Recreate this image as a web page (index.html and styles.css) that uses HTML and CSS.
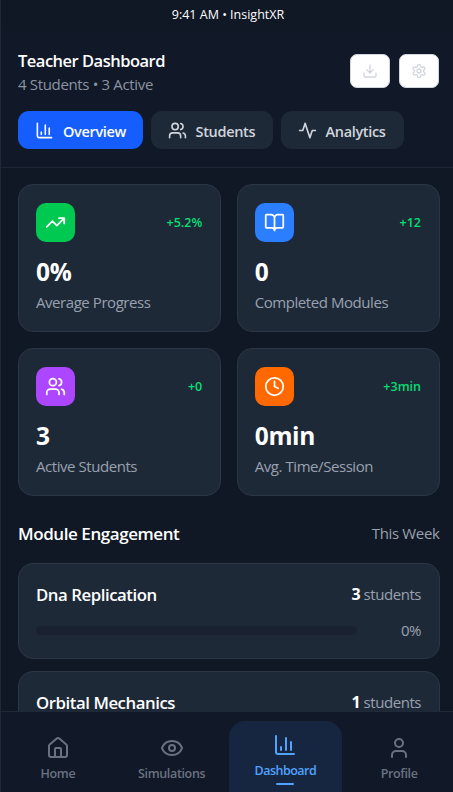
FILE: index.html
```html
<!DOCTYPE html>
<html lang="en">
<head>
<meta charset="utf-8">
<title>InsightXR</title>
<link rel="stylesheet" href="styles.css">
</head>
<body>
<svg class="sprite" aria-hidden="true">
  <symbol id="chart" viewBox="0 0 24 24"><path d="M3 3v16a2 2 0 0 0 2 2h16M18 17V9M13 17V5M8 17v-3"/></symbol>
  <symbol id="users" viewBox="0 0 24 24"><path d="M16 21v-2a4 4 0 0 0-4-4H6a4 4 0 0 0-4 4v2M16 3.13a4 4 0 0 1 0 7.74M22 21v-2a4 4 0 0 0-3-3.87"/><circle cx="9" cy="7" r="4"/></symbol>
  <symbol id="activity" viewBox="0 0 24 24"><path d="M22 12h-4l-3 9L9 3l-3 9H2"/></symbol>
  <symbol id="download" viewBox="0 0 24 24"><path d="M12 15V3M21 15v4a2 2 0 0 1-2 2H5a2 2 0 0 1-2-2v-4M7 10l5 5 5-5"/></symbol>
  <symbol id="settings" viewBox="0 0 24 24"><path d="M12.22 2h-.44a2 2 0 0 0-2 2v.18a2 2 0 0 1-1 1.73l-.43.25a2 2 0 0 1-2 0l-.15-.08a2 2 0 0 0-2.73.73l-.22.38a2 2 0 0 0 .73 2.73l.15.1a2 2 0 0 1 1 1.72v.51a2 2 0 0 1-1 1.74l-.15.09a2 2 0 0 0-.73 2.73l.22.38a2 2 0 0 0 2.73.73l.15-.08a2 2 0 0 1 2 0l.43.25a2 2 0 0 1 1 1.73V20a2 2 0 0 0 2 2h.44a2 2 0 0 0 2-2v-.18a2 2 0 0 1 1-1.73l.43-.25a2 2 0 0 1 2 0l.15.08a2 2 0 0 0 2.73-.73l.22-.39a2 2 0 0 0-.73-2.73l-.15-.08a2 2 0 0 1-1-1.74v-.5a2 2 0 0 1 1-1.74l.15-.09a2 2 0 0 0 .73-2.73l-.22-.38a2 2 0 0 0-2.73-.73l-.15.08a2 2 0 0 1-2 0l-.43-.25a2 2 0 0 1-1-1.73V4a2 2 0 0 0-2-2z"/><circle cx="12" cy="12" r="3"/></symbol>
  <symbol id="trend" viewBox="0 0 24 24"><path d="M22 7l-8.5 8.5-5-5L2 17M16 7h6v6"/></symbol>
  <symbol id="book" viewBox="0 0 24 24"><path d="M12 7v14M3 18a1 1 0 0 1-1-1V4a1 1 0 0 1 1-1h5a4 4 0 0 1 4 4 4 4 0 0 1 4-4h5a1 1 0 0 1 1 1v13a1 1 0 0 1-1 1h-6a3 3 0 0 0-3 3 3 3 0 0 0-3-3z"/></symbol>
  <symbol id="clock" viewBox="0 0 24 24"><circle cx="12" cy="12" r="10"/><path d="M12 6v6l4 2"/></symbol>
  <symbol id="home" viewBox="0 0 24 24"><path d="M15 21v-8a1 1 0 0 0-1-1h-4a1 1 0 0 0-1 1v8M3 10a2 2 0 0 1 .709-1.528l7-5.999a2 2 0 0 1 2.582 0l7 5.999A2 2 0 0 1 21 10v9a2 2 0 0 1-2 2H5a2 2 0 0 1-2-2z"/></symbol>
  <symbol id="eye" viewBox="0 0 24 24"><path d="M2.062 12.348a1 1 0 0 1 0-.696 10.75 10.75 0 0 1 19.876 0 1 1 0 0 1 0 .696 10.75 10.75 0 0 1-19.876 0"/><circle cx="12" cy="12" r="3"/></symbol>
  <symbol id="user" viewBox="0 0 24 24"><path d="M19 21v-2a4 4 0 0 0-4-4H9a4 4 0 0 0-4 4v2"/><circle cx="12" cy="7" r="4"/></symbol>
</svg>
<div class="app">
  <div class="status"><span>9:41 AM • InsightXR</span></div>
  <header class="header">
    <div class="heading">
      <div>
        <h1 class="title">Teacher Dashboard</h1>
        <p class="subtitle">4 Students • 3 Active</p>
      </div>
      <div class="actions">
        <button class="action"><svg><use href="#download"/></svg></button>
        <button class="action"><svg><use href="#settings"/></svg></button>
      </div>
    </div>
    <div class="tabs">
      <button class="tab tab-overview active"><svg><use href="#chart"/></svg><span>Overview</span></button>
      <button class="tab tab-students"><svg><use href="#users"/></svg><span>Students</span></button>
      <button class="tab tab-analytics"><svg><use href="#activity"/></svg><span>Analytics</span></button>
    </div>
  </header>
  <main class="content">
    <section class="stats">
      <article class="card stat">
        <div class="stat-top"><div class="tile green"><svg><use href="#trend"/></svg></div><span class="delta">+5.2%</span></div>
        <div class="value">0%</div><div class="label">Average Progress</div>
      </article>
      <article class="card stat">
        <div class="stat-top"><div class="tile blue"><svg><use href="#book"/></svg></div><span class="delta">+12</span></div>
        <div class="value">0</div><div class="label">Completed Modules</div>
      </article>
      <article class="card stat">
        <div class="stat-top"><div class="tile purple"><svg><use href="#users"/></svg></div><span class="delta">+0</span></div>
        <div class="value">3</div><div class="label">Active Students</div>
      </article>
      <article class="card stat">
        <div class="stat-top"><div class="tile orange"><svg><use href="#clock"/></svg></div><span class="delta">+3min</span></div>
        <div class="value">0min</div><div class="label">Avg. Time/Session</div>
      </article>
    </section>
    <div class="section-head"><h2 class="section-title">Module Engagement</h2><span class="period">This Week</span></div>
    <section class="modules">
      <article class="card module">
        <div class="module-top"><h3 class="module-name">Dna Replication</h3><span class="count"><b>3</b> students</span></div>
        <div class="progress"><div class="track"></div><span class="percent">0%</span></div>
      </article>
      <article class="card module">
        <div class="module-top"><h3 class="module-name">Orbital Mechanics</h3><span class="count"><b>1</b> students</span></div>
      </article>
    </section>
  </main>
  <nav class="nav">
    <a class="nav-item"><svg><use href="#home"/></svg><span>Home</span></a>
    <a class="nav-item"><svg><use href="#eye"/></svg><span>Simulations</span></a>
    <a class="nav-item current"><svg><use href="#chart"/></svg><span>Dashboard</span><i class="marker"></i></a>
    <a class="nav-item"><svg><use href="#user"/></svg><span>Profile</span></a>
  </nav>
</div>
</body>
</html>
```
FILE: styles.css
```css
* { box-sizing: border-box; margin: 0; padding: 0; }
body { width: 453px; height: 792px; overflow: hidden; background: #101827; font-family: "Open Sans", "Noto Sans", sans-serif; color: #fff; }
button { border: 0; font: inherit; }
svg { display: block; flex: none; fill: none; stroke: currentColor; stroke-width: 2; stroke-linecap: round; stroke-linejoin: round; }
.sprite { position: absolute; width: 0; height: 0; }
.app { height: 792px; display: flex; flex-direction: column; border-left: 1px solid #1f2937; background: #101725; }
.status { height: 31px; flex: none; padding-left: 2px; text-align: center; font-size: 12.5px; line-height: 30px; letter-spacing: 0; }
.header { height: 137px; flex: none; padding: 19px 14px 0 17px; border-bottom: 1px solid #1d2736; background: #111827; }
.heading { display: flex; justify-content: space-between; height: 61px; }
.title { font-size: 16.5px; line-height: 22px; font-weight: 600; letter-spacing: -0.5px; }
.subtitle { margin-top: 2px; font-size: 15px; line-height: 20px; letter-spacing: -0.34px; color: #8b94a3; }
.actions { display: flex; gap: 9px; padding-top: 4px; }
.action { display: grid; place-items: center; width: 40px; height: 34px; border: 1px solid #d1d5dc; border-radius: 7px; background: #fff; color: #d1d5dc; }
.action svg { width: 16px; height: 16px; stroke-width: 1.9; }
.tabs { display: flex; gap: 8px; }
.tab { display: flex; align-items: center; gap: 8px; height: 38px; padding: 0 0 0 17px; border-radius: 11px; background: #1e2938; color: #d1d5dc; font-size: 14.5px; font-weight: 600; letter-spacing: -0.33px; }
.tab span { padding-top: 2px; }
.tab svg { width: 19px; height: 19px; margin-right: 1px; }
.tab-overview { width: 124.5px; }
.tab-students { width: 122px; }
.tab-analytics { width: 123px; }
.tab.active { background: #155dfc; color: #fff; }
.content { flex: 1; min-height: 0; overflow: hidden; padding: 16px 13.5px 0 17px; }
.card { border: 1px solid #2c3746; border-radius: 15px; background: #1e2938; }
.stats { display: grid; grid-template-columns: 1fr 1fr; gap: 16px; }
.stat { height: 148px; padding: 18px 17.5px 0 17px; }
.stat-top { display: flex; align-items: center; justify-content: space-between; }
.tile { display: grid; place-items: center; width: 39px; height: 39px; border-radius: 10px; }
.tile svg { width: 21px; height: 21px; }
.green { background: #00c951; }
.blue { background: #2b7fff; }
.purple { background: #ad46ff; }
.orange { background: #ff6900; }
.delta { font-size: 12.5px; font-weight: 600; color: #05df72; letter-spacing: 0; }
.value { margin-top: 14px; font-size: 24.5px; line-height: 32px; font-weight: 700; letter-spacing: -0.35px; }
.label { margin-top: 4px; font-size: 15px; line-height: 20px; color: #99a1af; letter-spacing: -0.44px; white-space: nowrap; }
.section-head { display: flex; align-items: center; justify-content: space-between; height: 67px; padding-top: 8px; }
.section-title { font-size: 17px; font-weight: 600; letter-spacing: -0.43px; }
.period { padding-bottom: 1px; font-size: 15px; color: #99a1af; letter-spacing: -0.35px; }
.modules { display: grid; gap: 12px; }
.module { height: 96px; padding: 17px 17.5px 0 17px; }
.module-top { display: flex; align-items: center; justify-content: space-between; height: 26px; }
.module-name { font-size: 16.8px; font-weight: 600; letter-spacing: -0.45px; }
.count { font-size: 15px; color: #99a1af; letter-spacing: -0.45px; }
.count b { color: #fff; font-size: 16px; font-weight: 700; }
.progress { display: flex; align-items: center; justify-content: space-between; margin-top: 13px; height: 20px; }
.track { width: 321px; height: 9px; border-radius: 5px; background: #1a2231; }
.percent { font-size: 15px; color: #99a1af; letter-spacing: -0.5px; }
.nav { height: 81px; flex: none; display: grid; grid-template-columns: repeat(4, 113.75px); padding-top: 9px; border-top: 1px solid #1f2937; background: #111827; overflow: hidden; }
.nav-item { display: flex; flex-direction: column; align-items: center; padding-top: 15px; border-radius: 16px 16px 0 0; color: #6a7282; font-size: 12.5px; line-height: 18px; font-weight: 600; letter-spacing: -0.35px; }
.nav-item svg { width: 24px; height: 24px; margin-bottom: 5px; }
.nav-item.current { padding-top: 12px; background: #162640; color: #51a2ff; letter-spacing: -0.5px; }
.nav-item.current svg { margin-bottom: 5px; }
.marker { width: 18px; height: 2px; margin-top: 3px; border-radius: 1px; background: #51a2ff; }
```
